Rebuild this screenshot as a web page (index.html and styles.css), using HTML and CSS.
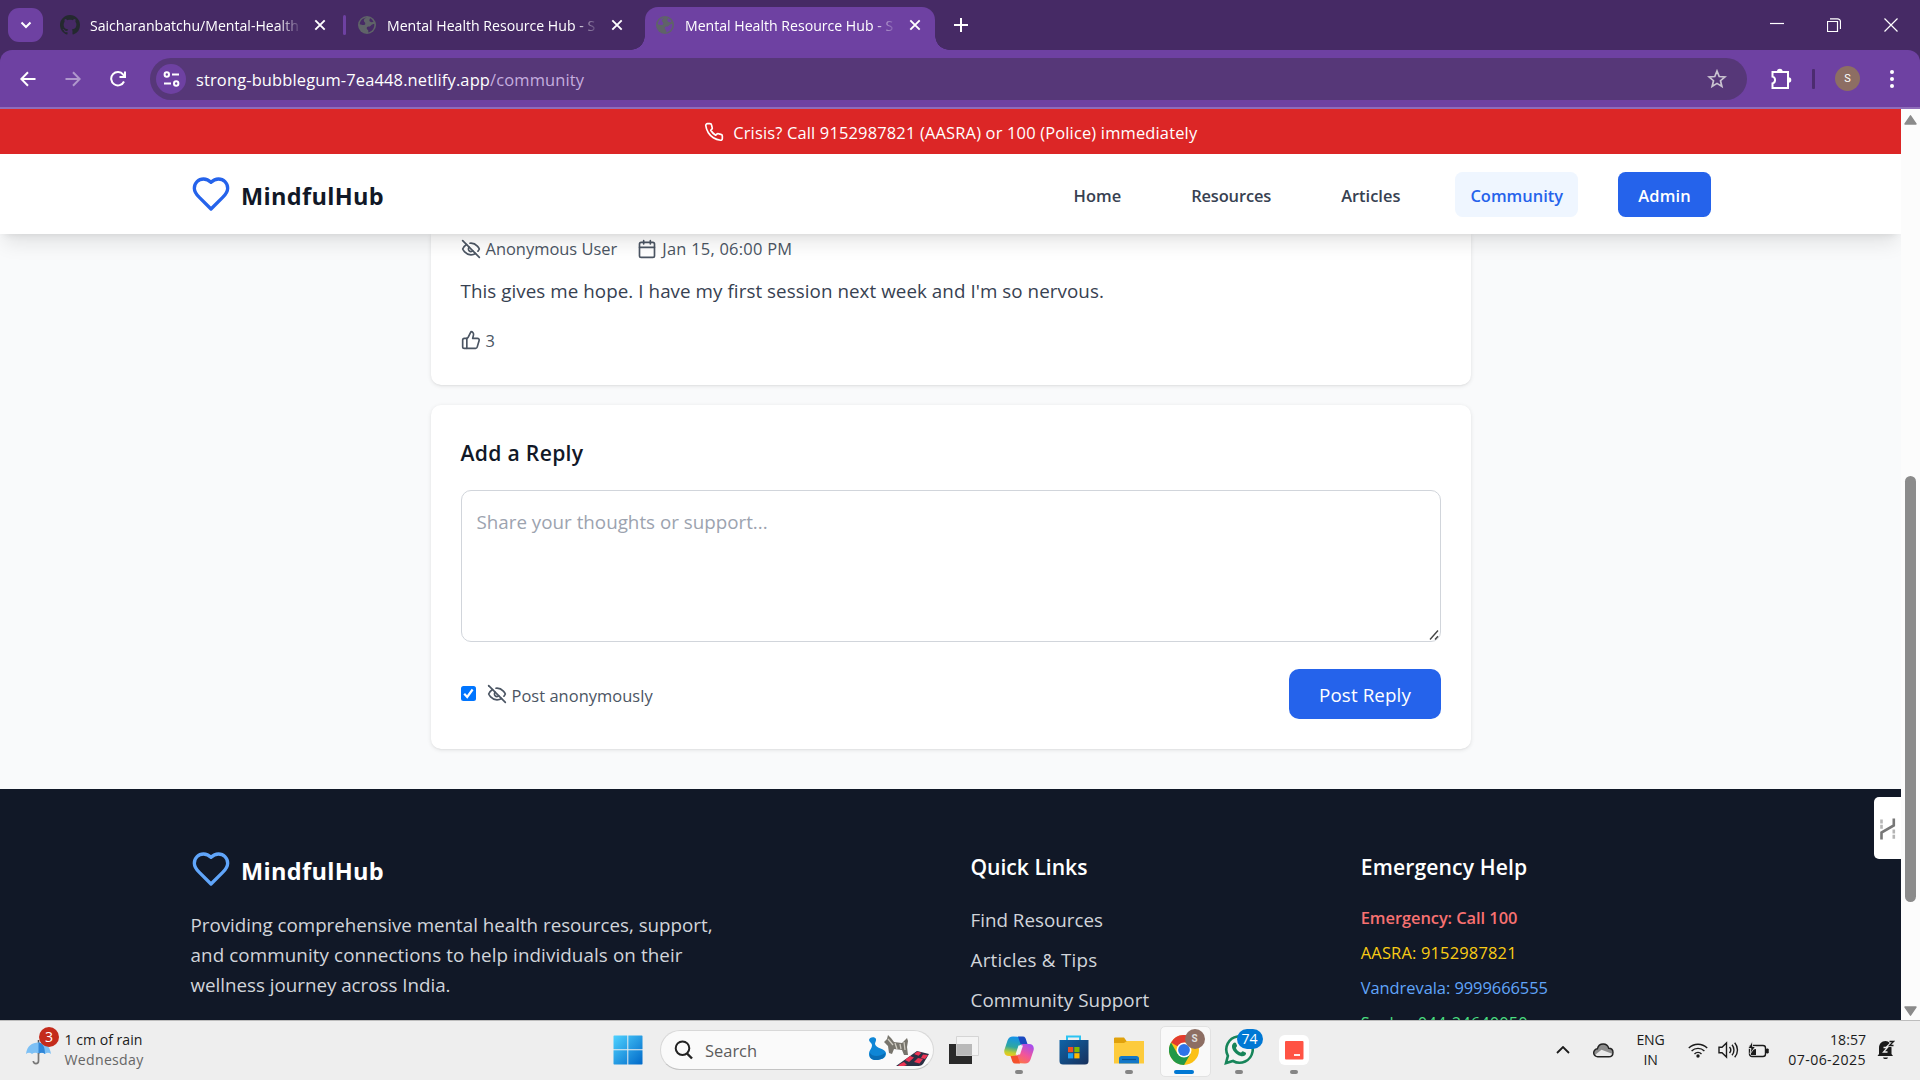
FILE: index.html
```html
<!DOCTYPE html>
<html lang="en">
<head>
<meta charset="utf-8">
<title>Mental Health Resource Hub</title>
<link rel="stylesheet" href="styles.css">
</head>
<body>
<svg class="sprite" aria-hidden="true">
  <symbol id="x" viewBox="0 0 12 12"><path d="M1.3 1.3l9.4 9.4M10.7 1.3l-9.4 9.4" fill="none" stroke="currentColor" stroke-width="1.9"/></symbol>
  <symbol id="globe" viewBox="0 0 20 20"><circle cx="10" cy="10" r="9" fill="#5f6368"/><path d="M10 2.6c-2 .4-3 1.400-3.200 3 0 1.500 1.500 1.700 1.500 3.200 0 1.200-1.400 1.400-2.700 1.200L2.700 9.300C3 5.800 6 2.800 10 2.600zM17.300 9c.3 4-2 7.600-6 8.400v-1.600c0-1.100-1.600-1-1.600-2.500 0-1.600 1.400-1.800 2.800-1.800 1.300 0 1.500-2.500 4.800-2.500zM13 3.300c1.500.7 2.800 1.900 3.500 3.500-1.500.8-3.500.4-4-.7-.3-.9.200-1.800.5-2.800z" fill="var(--tab)"/></symbol>
  <symbol id="heart" viewBox="0 0 24 24"><path d="M19 14c1.490-1.460 3-3.210 3-5.500A5.500 5.500 0 0 0 16.500 3c-1.760 0-3 .5-4.500 2-1.500-1.500-2.740-2-4.500-2A5.500 5.500 0 0 0 2 8.500c0 2.300 1.500 4.050 3 5.500l7 7Z"/></symbol>
  <symbol id="eye-off" viewBox="0 0 24 24"><path d="M9.880 9.880a3 3 0 1 0 4.240 4.240"/><path d="M10.730 5.080A10.430 10.430 0 0 1 12 5c7 0 10 7 10 7a13.160 13.160 0 0 1-1.670 2.680"/><path d="M6.610 6.610A13.526 13.526 0 0 0 2 12s3 7 10 7a9.740 9.740 0 0 0 5.390-1.610"/><path d="M2 2l20 20"/></symbol>
</svg>

<header class="browser">
  <div class="tabstrip">
    <button class="tab-search"><svg width="12" height="8" viewBox="0 0 12 8"><path d="M1.500 1.500L6 6l4.500-4.500" class="ln w2"/></svg></button>
    <div class="tab tab-a">
      <svg class="fav" viewBox="0 0 16 16"><path fill="#24292f" d="M8 0C3.580 0 0 3.580 0 8c0 3.540 2.290 6.530 5.470 7.590.4.070.55-.17.55-.38 0-.19-.01-.82-.01-1.490-2.010.37-2.530-.49-2.690-.94-.09-.23-.48-.94-.82-1.130-.28-.15-.68-.52-.01-.53.63-.01 1.080.58 1.230.82.72 1.210 1.870.87 2.330.66.070-.52.28-.87.51-1.070-1.780-.2-3.640-.89-3.640-3.950 0-.87.31-1.590.82-2.150-.08-.2-.36-1.020.08-2.120 0 0 .67-.21 2.200.82.64-.18 1.320-.27 2-.27s1.360.09 2 .27c1.530-1.040 2.200-.82 2.200-.82.44 1.100.16 1.920.08 2.120.51.56.82 1.270.82 2.150 0 3.070-1.870 3.750-3.650 3.950.29.25.54.73.54 1.480 0 1.070-.01 1.930-.01 2.200 0 .21.15.46.55.38A8.010 8.010 0 0 0 16 8c0-4.420-3.580-8-8-8z"/></svg>
      <span class="tab-title">Saicharanbatchu/Mental-Health</span>
      <svg class="tab-x"><use href="#x"/></svg>
    </div>
    <div class="tab-sep"></div>
    <div class="tab tab-b">
      <svg class="fav"><use href="#globe"/></svg>
      <span class="tab-title">Mental Health Resource Hub - S</span>
      <svg class="tab-x"><use href="#x"/></svg>
    </div>
    <div class="tab tab-active">
      <svg class="fav"><use href="#globe"/></svg>
      <span class="tab-title">Mental Health Resource Hub - S</span>
      <svg class="tab-x"><use href="#x"/></svg>
    </div>
    <svg class="tab-new" width="14" height="14" viewBox="0 0 14 14"><path d="M7 0v14M0 7h14" class="ln w2"/></svg>
    <div class="win">
      <svg width="14" height="14" viewBox="0 0 14 14"><path d="M0 5.500h14" class="ln"/></svg>
      <svg width="14" height="14" viewBox="0 0 14 14"><path d="M.5 3.500h10v10H.5z" class="ln"/><path d="M3 .8h7.500a3 3 0 0 1 3 3V11" class="ln"/></svg>
      <svg width="14" height="14" viewBox="0 0 14 14"><path d="M.5.5l13 13M13.500.5l-13 13" class="ln"/></svg>
    </div>
  </div>
  <div class="toolbar">
    <svg class="back" width="16" height="16" viewBox="0 0 16 16"><path d="M15.500 8H1.500M8 1.200L1.300 8 8 14.800" class="ln w2"/></svg>
    <svg class="fwd" width="16" height="16" viewBox="0 0 16 16"><path d="M.5 8h14M8 1.200L14.700 8 8 14.800" class="ln w2"/></svg>
    <svg class="reload" width="16" height="16" viewBox="0 0 16 16"><path d="M14 10.500A6.700 6.700 0 1 1 13.200 3.600L14.800 5.500" class="ln w2"/><path d="M15 .5v5.600H9.500" class="ln w2"/></svg>
    <div class="omnibox">
      <div class="site-chip"><svg width="17" height="16" viewBox="0 0 17 16"><circle cx="3.800" cy="3.500" r="2.200" class="ln w2"/><path d="M9 3.500h7M1 12.500h7" class="ln w2"/><circle cx="13.200" cy="12.500" r="2.200" class="ln w2"/></svg></div>
      <span class="url">strong-bubblegum-7ea448.netlify.app<span class="path">/community</span></span>
      <svg class="star" width="20" height="20" viewBox="0 0 20 20"><path d="M10 2l2.200 5.500 5.800.4-4.500 3.800 1.400 5.800L10 14.400l-4.900 3.100 1.400-5.800L2 7.900l5.800-.4z"/></svg>
    </div>
    <svg class="puzzle" width="22" height="22" viewBox="0 0 22 22"><path d="M2.500 4h15.500v16H2.500v-4.600c3.400-.8 3.400-6 0-6.800z" class="ln w2"/><path d="M7 3.500a2.800 2.800 0 0 1 5.600 0zM18.500 9.200a2.800 2.800 0 0 1 0 5.600z" fill="currentColor"/></svg>
    <div class="bar-sep"></div>
    <div class="avatar">S</div>
    <div class="kebab"><i></i><i></i><i></i></div>
  </div>
</header>

<div class="viewport">
  <div class="page">
    <div class="crisis">
      <svg class="ic ic20" viewBox="0 0 24 24"><path d="M22 16.920v3a2 2 0 0 1-2.180 2 19.790 19.790 0 0 1-8.630-3.070 19.500 19.500 0 0 1-6-6 19.790 19.790 0 0 1-3.070-8.670A2 2 0 0 1 4.110 2h3a2 2 0 0 1 2 1.720 12.840 12.840 0 0 0 .7 2.810 2 2 0 0 1-.45 2.110L8.090 9.910a16 16 0 0 0 6 6l1.270-1.270a2 2 0 0 1 2.110-.45 12.840 12.840 0 0 0 2.810.7A2 2 0 0 1 22 16.920z"/></svg>
      <span>Crisis? Call 9152987821 (AASRA) or 100 (Police) immediately</span>
    </div>
    <nav class="nav">
      <div class="wrap nav-row">
        <div class="brand"><svg class="ic ic40"><use href="#heart"/></svg><span>MindfulHub</span></div>
        <div class="links">
          <a>Home</a><a class="res">Resources</a><a>Articles</a><a class="on">Community</a><a class="admin">Admin</a>
        </div>
      </div>
    </nav>

    <main class="thread">
      <section class="card reply">
        <div class="meta">
          <span class="m"><svg class="ic ic20"><use href="#eye-off"/></svg>Anonymous User</span>
          <span class="m date"><svg class="ic ic20" viewBox="0 0 24 24"><rect x="3" y="4" width="18" height="18" rx="2"/><path d="M16 2v4M8 2v4M3 10h18"/></svg><span>Jan 15, 06:00 PM</span></span>
        </div>
        <p class="body">This gives me hope. I have my first session next week and I'm so nervous.</p>
        <div class="m likes"><svg class="ic ic20" viewBox="0 0 24 24"><path d="M7 10v12"/><path d="M15 5.880 14 10h5.830a2 2 0 0 1 1.920 2.560l-2.330 8A2 2 0 0 1 17.500 22H4a2 2 0 0 1-2-2v-8a2 2 0 0 1 2-2h2.760a2 2 0 0 0 1.790-1.110L12 2a3.130 3.130 0 0 1 3 3.880Z"/></svg>3</div>
      </section>
      <section class="card form">
        <h3>Add a Reply</h3>
        <div class="field">
          <textarea placeholder="Share your thoughts or support..."></textarea>
          <svg class="grip" width="10" height="11" viewBox="0 0 10 11"><path d="M1 10.500L9 1.500M6 10.500L9 7.200"/></svg>
        </div>
        <div class="form-row">
          <label class="anon"><span class="check"><svg width="15" height="15" viewBox="0 0 15 15"><path d="M3.200 7.800l3 3.200 5.400-7.500"/></svg></span><svg class="ic ic20"><use href="#eye-off"/></svg><span>Post anonymously</span></label>
          <button class="post">Post Reply</button>
        </div>
      </section>
    </main>

    <footer class="footer">
      <div class="wrap cols">
        <div class="about">
          <div class="brand"><svg class="ic ic40"><use href="#heart"/></svg><span>MindfulHub</span></div>
          <p>Providing comprehensive mental health resources, support,<br><span class="l2">and community connections to help individuals on their</span><br>wellness journey across India.</p>
        </div>
        <div>
          <h4 class="ql">Quick Links</h4>
          <ul class="quick"><li>Find Resources</li><li class="at">Articles &amp; Tips</li><li class="l2">Community Support</li></ul>
        </div>
        <div>
          <h4>Emergency Help</h4>
          <ul class="help"><li class="red">Emergency: Call 100</li><li class="yellow">AASRA: 9152987821</li><li class="blue">Vandrevala: 9999666555</li><li class="green">Sneha: 044-24640050</li></ul>
        </div>
      </div>
      <div class="widget"><svg width="17" height="22" viewBox="0 0 17 22"><path d="M2.500 1.500v9.500M14.800 11.500v10" stroke="#b5b5b5" stroke-width="2.600" stroke-dasharray="4 1.200" fill="none"/><path d="M2.500 21.500v-7L14.800 7.500V.5" stroke="#777" stroke-width="2.600" fill="none"/></svg></div>
    </footer>
  </div>
  <div class="scrollbar">
    <svg width="13" height="10" viewBox="0 0 13 10"><path d="M6.500.8L12 9H1z"/></svg>
    <div class="thumb"></div>
    <svg width="13" height="10" viewBox="0 0 13 10"><path d="M6.500 9.200L12 1H1z"/></svg>
  </div>
</div>

<div class="taskbar">
  <div class="weather">
    <div class="umb">
      <svg width="26" height="26" viewBox="0 0 26 26"><path d="M12.500 1v4" stroke="#555" stroke-width="1.500"/><path d="M0 15C1 7 6 3.500 12.500 3.500S24 7 25 15c-2-1.600-4-1.600-6 0-2-1.600-4-1.600-6.500 0-2-1.600-4.500-1.600-6.500 0-2-1.600-4-1.600-6 0z" fill="#7cc0f5"/><path d="M12.500 3.500C17 4 19 8 19 15c-2-1.600-4.500-1.600-6.500 0z" fill="#2f86d8"/><path d="M12.500 14v8a2.600 2.600 0 0 1-5.200 0" fill="none" stroke="#777" stroke-width="1.700"/></svg>
      <b class="badge">3</b>
    </div>
    <div class="wtext"><span>1 cm of rain</span><span class="dim">Wednesday</span></div>
  </div>
  <div class="apps">
    <div class="cell"><svg width="30" height="30" viewBox="0 0 30 30"><defs><linearGradient id="w" x2="1" y2="1"><stop stop-color="#4fd2ff"/><stop offset="1" stop-color="#0068c8"/></linearGradient></defs><path fill="url(#w)" d="M1 .5h13.300v13.800H.5V1zM15.300.5H29l.5.5v13.300H15.300zM.5 15.300h13.800v14.200H1l-.5-.5zM15.300 15.300h14.200V29l-.5.5H15.300z"/></svg></div>
    <div class="search">
      <svg width="20" height="20" viewBox="0 0 20 20"><circle cx="8.500" cy="8.200" r="6.800" fill="none" stroke="#222" stroke-width="2"/><path d="M13 13.500l5 5" stroke="#222" stroke-width="2.400"/></svg>
      <span>Search</span>
      <svg class="art" width="62" height="34" viewBox="0 0 62 34">
        <path d="M1 7c0-3 6-4 7-1 .5 2-1 3-1 5 1 5 10 4 11 9 .5 5-5 7-10 7-4 0-7-2-7-6 0-4 3-5 3-9 0-2-3-3-3-5z" fill="#0f86d6"/><path d="M2 20c2 4 10 4 15 0 .6 5-4 7-9 7-4 0-7-2-6-7z" fill="#0a6db5"/>
        <path d="M16 9l3-3 1-4 3 3 3 4 8 1 5-5 1 3-1 6 1 8h-4l-2-5-8-1-2 5-3-1-1-7-3-3z" fill="#77746c"/><path d="M20 6l5 6M27 10l2 6M32 11l1 5M36 9l1 8" stroke="#cfccc2" stroke-width="1.300"/>
        <path d="M28 33L49 18l12 3-6 10c-2 2-4 2-6 2z" fill="#2b3044"/><path d="M37 27l5-4 4 1.500-5 4.500zM46 21l3.500-2.500 4 1.200-3 3zM46 29l4-4 5 1-3.500 4.500zM55 21.500l5 .5-3 4-4-1zM32 31l4-2 3 3-3 1h-6z" fill="#ee3554"/>
      </svg>
    </div>
    <div class="cell"><svg width="30" height="28" viewBox="0 0 30 28"><path d="M0 8h23v20H0z" fill="#2a2a2a"/><path d="M7.500.5h22v19h-22z" fill="#f4f4f4" stroke="#d5d5d5"/><path d="M7.500 8H23v11.500H7.500z" fill="#b9b9b9"/></svg></div>
    <div class="cell run"><svg width="30" height="28" viewBox="0 0 30 28"><defs><linearGradient id="c1" x1=".3" x2=".1" y2="1"><stop stop-color="#1593e8"/><stop offset=".5" stop-color="#2fa7a0"/><stop offset=".8" stop-color="#c3cf2e"/><stop offset="1" stop-color="#fbc318"/></linearGradient><linearGradient id="c2" x1=".8" x2=".2" y2="1"><stop stop-color="#a44df0"/><stop offset=".5" stop-color="#f2559a"/><stop offset="1" stop-color="#ff7b35"/></linearGradient></defs><path d="M19 1l3 7-6 1-4 11H5c-4 0-5.500-3-4.500-6.500L3.500 4.500C4.500 2 6 .5 9 .5z" fill="url(#c1)"/><path d="M14 .5h5c2 0 2.800 2 3.300 4l1.200 3.500h-7z" fill="#1a49c0"/><path d="M11 27l-3-7 6-1 4-11h7c4 0 5.500 3 4.500 6.500l-3 9C25.500 26 24 27.500 21 27.500z" fill="url(#c2)"/><path d="M16 27.500h-5c-2 0-2.800-2-3.300-4L6.500 20h7z" fill="#f4512c"/><path d="M14.500 9.500h4.500l-3 9h-4.500z" fill="#f3f3f3"/></svg></div>
    <div class="cell"><svg width="30" height="30" viewBox="0 0 30 30"><path d="M8 6V1.500h13V6" fill="none" stroke="#2cc3f2" stroke-width="2"/><defs><linearGradient id="st" x2="1" y2="1"><stop stop-color="#0f64a8"/><stop offset="1" stop-color="#17305c"/></linearGradient></defs><path d="M.5 5h29v21a3.500 3.500 0 0 1-3.500 3.500H4A3.500 3.500 0 0 1 .5 26z" fill="url(#st)"/><path d="M9 12h5.200v5.200H9z" fill="#f25022"/><path d="M15.300 12h5.200v5.200h-5.200z" fill="#7fba00"/><path d="M9 18.200h5.200v5.200H9z" fill="#1ba1f2"/><path d="M15.300 18.200h5.200v5.200h-5.200z" fill="#ffb900"/></svg></div>
    <div class="cell run"><svg width="30" height="27" viewBox="0 0 30 27"><path d="M0 1.500C0 .8.700.5 1.500.5H10l2.500 3.500H30v6H0z" fill="#e0a10c"/><path d="M0 6h10l3-2h17v22.500H0z" fill="#fdcb3c"/><path d="M5 26.500v-5c0-1.500 1-2.500 2.500-2.500h15c1.500 0 2.500 1 2.500 2.500v5z" fill="#1378c8"/><path d="M8 22.500h14" stroke="#0b518d" stroke-width="1.200"/></svg></div>
    <div class="cell active"><svg width="30" height="30" viewBox="0 0 30 30"><circle cx="15" cy="15" r="15" fill="#fbc116"/><path d="M15 15L2 7.500A15 15 0 0 1 28 7.500H15z" fill="#e33b2e"/><path d="M2 7.500A15 15 0 0 0 15 30l6.500-11.300L15 15 8.500 18.700z" fill="#229848"/><circle cx="15" cy="15" r="7.500" fill="#fff"/><circle cx="15" cy="15" r="5.900" fill="#2f74e8"/></svg><b class="badge ava">S</b></div>
    <div class="cell run"><svg width="30" height="30" viewBox="0 0 30 30"><path d="M2 28l1.900-7.200A13.200 13.200 0 1 1 9 26z" fill="#f4f4f4" stroke="#17855a" stroke-width="2.600"/><path d="M9.500 8c1-.9 2.200-.7 2.700.5l.8 2c.3.900-1.200 2-1.100 2.400.9 2 2.500 3.600 4.700 4.600.6.200 1.500-1.600 2.300-1.300l2.600 1.300c1 .6.500 2-.3 2.800-1.900 1.700-4.700 1.100-7.500-.5-2.500-1.500-4.400-3.600-5.300-6C7.600 11.500 7.900 9.300 9.500 8z" fill="#17855a"/></svg><b class="badge wa">74</b></div>
    <div class="cell run"><svg width="30" height="30" viewBox="0 0 30 30"><rect width="30" height="30" rx="6" fill="#fff"/><rect x="6" y="6" width="18.500" height="18.500" rx="1" fill="#ff5344"/><path d="M15 20h6" stroke="#fff" stroke-width="1.800"/></svg></div>
  </div>
  <div class="tray">
    <svg class="t1" width="14" height="8" viewBox="0 0 14 8"><path d="M1 7l6-6 6 6" class="dk"/></svg>
    <svg class="t2" width="21" height="15" viewBox="0 0 21 15"><path d="M5 13.800a4 4 0 0 1-.6-8C5 3.200 7.200 1 10.200 1c2.700 0 4.800 1.600 5.500 4.200 2.600 0 4.300 1.900 4.300 4.300s-1.700 4.300-4.200 4.300z" fill="#8d8d8d" stroke="#222" stroke-width="1.400"/><path d="M2.500 11.500L8.500 6.800l10.500 4c-.6 1.500-1.800 2.300-3 2.300H5c-1.200 0-2-.6-2.500-1.600z" fill="#e9e9e9"/></svg>
    <div class="lang"><span>ENG</span><span>IN</span></div>
    <svg class="t3" width="20" height="16" viewBox="0 0 20 16"><path d="M.8 6a13 13 0 0 1 18.400 0M3.600 9a9 9 0 0 1 12.800 0M6.500 12a5 5 0 0 1 7 0" class="dk t"/><circle cx="10" cy="14" r="1.700" fill="#1b1b1b"/></svg>
    <svg class="t4" width="21" height="18" viewBox="0 0 21 18"><path d="M1 6.300h3L8.500 2v14L4 11.700H1z" class="dk t"/><path d="M11.500 6c1.500 1.700 1.500 4.300 0 6M14 3.800c2.600 3 2.600 7.400 0 10.400M16.700 1.700c3.700 4.300 3.700 10.300 0 14.600" class="dk t"/></svg>
    <svg class="t5" width="21" height="18" viewBox="0 0 21 18"><rect x="1.500" y="4.500" width="16" height="11" rx="2.500" class="dk t"/><path d="M18.500 8h1.700v4h-1.700z" fill="#1b1b1b" stroke="#1b1b1b"/><path d="M3 14V9l5-1v6z" fill="#1b1b1b"/><path d="M4.500 0L0 7.500h3L2 13l5.500-7.500h-3z" fill="#1b1b1b" stroke="#eee" stroke-width=".8"/></svg>
    <div class="clock"><span>18:57</span><span class="d">07-06-2025</span></div>
    <svg class="t6" width="18" height="20" viewBox="0 0 18 20"><path d="M2 14V8c0-4 2.500-7 6.500-7 3.500 0 6 3 6 7v6l1.500 2H.5z" fill="#1b1b1b"/><path d="M6 17.500h5c-.5 2-4.500 2-5 0z" fill="#1b1b1b"/><path d="M6.500 7.500h4l-4 4.500h4" fill="none" stroke="#eee" stroke-width="1.300"/><path d="M12.500 1.500h4l-4 4h4" fill="none" stroke="#eee" stroke-width="3.200"/><path d="M12.500 1.500h4l-4 4h4" fill="none" stroke="#1b1b1b" stroke-width="1.300"/></svg>
  </div>
</div>
</body>
</html>
```
FILE: styles.css
```css
* { box-sizing: border-box; }
body {
  margin: 0; width: 1920px; height: 1080px; overflow: hidden;
  display: flex; flex-direction: column;
  font-family: "Open Sans", "Noto Sans", sans-serif; font-size: 18.8px; line-height: 30px;
}
h3, h4, p, ul { margin: 0; padding: 0; }
ul { list-style: none; }
svg { display: block; flex: none; }
button { border: 0; padding: 0; font: inherit; color: inherit; }
.sprite { position: absolute; width: 0; height: 0; }
.ln { fill: none; stroke: currentColor; stroke-width: 1.2; }
.ln.w2 { stroke-width: 2; }
.ic { fill: none; stroke: currentColor; stroke-width: 2; stroke-linecap: round; stroke-linejoin: round; }
.ic20 { width: 20px; height: 20px; }
.ic40 { width: 40px; height: 40px; }

/* Browser chrome */
.browser { flex: none; height: 109px; background: #462a65; color: #fff; border-bottom: 2px solid #8f6cb9; }
.tabstrip { height: 50px; display: flex; align-items: center; }
.tab-search { width: 35px; height: 34px; margin: 0 0 0 8px; border-radius: 11px; background: #6e41a2; display: flex; align-items: center; justify-content: center; }
.tab { --tab: #462a65; display: flex; align-items: center; font-size: 14.1px; line-height: 20px; }
.tab-a { margin-left: 17px; width: 283px; }
.tab-b { margin-left: 11px; width: 288px; }
.tab-active {
  --tab: #6e41a2; position: relative; align-self: flex-end; width: 290px; height: 43px; padding: 0 0 7px 10px;
  border-radius: 13px 13px 0 0; background: #6e41a2;
}
.tab-active::before, .tab-active::after { content: ""; position: absolute; bottom: 0; width: 14px; height: 14px; }
.tab-active::before { left: -14px; background: radial-gradient(circle at 0 0, transparent 13.5px, #6e41a2 14px); }
.tab-active::after { right: -14px; background: radial-gradient(circle at 100% 0, transparent 13.5px, #6e41a2 14px); }
.fav { width: 20px; height: 20px; }
.tab-title { width: 211px; margin-left: 10px; padding-top: 2px; white-space: nowrap; -webkit-mask: linear-gradient(90deg, #000 188px, transparent 212px); mask: linear-gradient(90deg, #000 188px, transparent 212px); }
.tab-x { width: 12px; height: 12px; margin-left: 13px; }
.tab-sep { width: 3px; height: 20px; border-radius: 2px; background: #6e41a2; }
.tab-new { margin-left: 19px; }
.win { margin-left: auto; display: flex; gap: 43px; padding-right: 22px; }
.toolbar { height: 57px; display: flex; align-items: center; background: #6e41a2; border-radius: 12px 12px 0 0; }
.back { margin-left: 20px; }
.fwd { margin-left: 29px; opacity: .45; }
.reload { margin-left: 29px; }
.omnibox { width: 1597px; height: 42px; margin-left: 24px; border-radius: 21px; background: #563778; display: flex; align-items: center; padding: 0 20px 0 6px; }
.site-chip { width: 30px; height: 30px; border-radius: 50%; background: #6e41a2; display: flex; align-items: center; justify-content: center; }
.url { margin-left: 10px; padding-top: 2px; font-size: 16.45px; letter-spacing: .15px; }
.path { color: #c5aedf; }
.star { margin-left: auto; fill: none; stroke: #c9c3d0; stroke-width: 1.7; }
.puzzle { margin-left: 23px; }
.bar-sep { width: 3px; height: 20px; margin-left: 20px; background: #4c2c70; border-radius: 1px; }
.avatar { width: 25px; height: 25px; margin-left: 20px; border-radius: 50%; background: #8d6e63; font: 11px/25px Roboto, sans-serif; text-align: center; }
.kebab { margin-left: 30px; display: grid; gap: 3px; }
.kebab i { width: 4px; height: 4px; border-radius: 50%; background: #fff; }

/* Page */
.viewport { flex: none; height: 911px; display: flex; overflow: hidden; background: #f9fafb; }
.page { width: 1901px; height: 911px; overflow: hidden; }
.wrap { width: 1521px; margin: 0 auto; }
.crisis { height: 45px; display: flex; align-items: center; justify-content: center; gap: 9.5px; background: #dc2626; color: #fff; font-size: 16.45px; letter-spacing: .17px; }
.crisis span { padding-top: 2px; }
.nav { position: relative; height: 80px; background: #fff; box-shadow: 0 12.5px 19px -4px rgba(0,0,0,.1), 0 5px 7.5px -5px rgba(0,0,0,.1); }
.nav-row { height: 80px; display: flex; align-items: center; justify-content: space-between; }
.brand { display: flex; align-items: center; height: 40px; gap: 10px; padding-left: 1px; font-size: 23.5px; font-weight: 700; letter-spacing: .33px; color: #111827; }
.brand span { padding-top: 3px; }
.nav .brand svg { color: #2563eb; }
.links { display: flex; gap: 40px; padding-top: 1px; font-size: 16.45px; font-weight: 600; color: #374151; }
.links a { height: 45px; line-height: 47px; padding: 0 15px; border-radius: 7.5px; }
.links .res { letter-spacing: -.13px; }
.links .on { background: #eff6ff; color: #2563eb; letter-spacing: .02px; }
.links .admin { padding: 0 20px; background: #2563eb; color: #fff; letter-spacing: .2px; }

.thread { width: 1040px; margin: 0 auto; height: 555px; }
.card { background: #fff; border-radius: 10px; padding: 0 30px; box-shadow: 0 1px 4px rgba(0,0,0,.1), 0 1px 2px -1px rgba(0,0,0,.1); }
.reply { height: 151px; padding-top: 2px; border-radius: 0 0 10px 10px; }
.meta { display: flex; gap: 20px; }
.m { display: flex; align-items: center; gap: 5px; height: 25px; font-size: 16.45px; line-height: 25px; color: #4b5563; }
.date span { letter-spacing: .25px; }
.body { margin-top: 15px; letter-spacing: .06px; color: #374151; }
.likes { margin-top: 21.5px; }
.form { margin-top: 20px; height: 344px; padding-top: 30px; }
.form h3 { font-size: 21.15px; line-height: 35px; font-weight: 600; letter-spacing: .3px; color: #111827; }
.field { position: relative; margin-top: 20px; }
.form textarea { display: block; width: 980px; height: 152px; padding: 16px 15px; border: 1px solid #d1d5db; border-radius: 10px; font: inherit; resize: none; background: #fff; }
.form textarea::placeholder { color: #9ca3af; opacity: 1; }
.grip { position: absolute; right: 2px; bottom: 2px; fill: none; stroke: #444; stroke-width: 1.4; }
.form-row { margin-top: 27px; display: flex; justify-content: space-between; align-items: center; }
.anon { display: flex; align-items: center; font-size: 16.45px; line-height: 25px; color: #4b5563; }
.anon .check { width: 15px; height: 15px; margin: 0 11px 2px 0; border-radius: 2.5px; background: #0075ff; }
.check path { fill: none; stroke: #fff; stroke-width: 2.2; }
.anon > span:last-child { margin-left: 5px; padding-top: 3px; letter-spacing: .04px; }
.post { width: 152px; height: 50px; padding: 1px 0 0 1px; border-radius: 10px; background: #2563eb; color: #fff; letter-spacing: .1px; }

.footer { position: relative; height: 300px; padding-top: 60px; background: #111827; color: #d1d5db; }
.footer .brand { color: #fff; }
.footer .brand svg { color: #60a5fa; }
.cols { display: grid; grid-template-columns: 740.5px 350.25px 350.25px; gap: 40px; }
.about p { margin-top: 21px; white-space: nowrap; padding-left: .5px; letter-spacing: -.02px; }
.l2 { letter-spacing: .1px; }
.cols h4 { font-size: 21.15px; line-height: 35px; font-weight: 600; letter-spacing: .1px; color: #fff; }
.cols h4.ql { letter-spacing: -.03px; }
.quick { margin-top: 20.7px; display: grid; gap: 10px; }
.quick .at { letter-spacing: .25px; }
.help { margin-top: 21px; display: grid; gap: 10px; font-size: 16.45px; line-height: 25px; }
.red { color: #f87171; font-weight: 600; letter-spacing: -.06px; }
.yellow { color: #facc15; letter-spacing: .18px; }
.blue { color: #60a5fa; letter-spacing: -.05px; }
.green { color: #4ade80; letter-spacing: .12px; }
.widget { position: absolute; right: 0; top: 8px; width: 27px; height: 62px; background: #fff; border-radius: 5px 0 0 5px; display: flex; align-items: center; padding: 1px 0 0 5px; }

.scrollbar { width: 19px; background: #fcfcfc; display: flex; flex-direction: column; align-items: center; padding: 6px 0 4px; fill: #8b8b8b; }
.scrollbar path { stroke: #8b8b8b; stroke-width: 1.4; stroke-linejoin: round; }
.thumb { width: 11px; height: 426px; margin: 351px 0 auto; border-radius: 6px; background: #8b8b8b; }

/* Taskbar */
.taskbar { flex: none; height: 60px; display: grid; grid-template-columns: 600px 722px 1fr; background: #eee; border-top: 1px solid #bdbdbd; color: #1b1b1b; font-size: 14.1px; line-height: 20px; }
.weather { display: flex; padding: 0 0 0 26px; align-items: center; }
.umb { position: relative; padding-top: 3px; }
.badge { position: absolute; width: 20px; height: 20px; border-radius: 10px; color: #fff; font-weight: 400; text-align: center; line-height: 20px; }
.umb .badge { left: 13px; top: -9px; background: #c42b1c; }
.wtext { display: grid; margin: 0 0 2px 12.5px; }
.dim { color: #666; letter-spacing: .3px; }
.apps { display: flex; align-items: center; }
.cell { position: relative; width: 55px; height: 59px; display: flex; align-items: center; justify-content: center; padding-bottom: 1px; }
.run::after, .active::after { content: ""; position: absolute; left: 23.5px; bottom: 6px; width: 8px; height: 4px; border-radius: 2px; background: #858585; }
.active::before { content: ""; position: absolute; left: 3px; top: 5px; width: 49px; height: 49px; border-radius: 5px; background: #f9f9f9; border: 1px solid #e2e2e2; }
.active svg { position: relative; }
.active::after { left: 17.5px; width: 20px; background: #0078d4; }
.ava { left: 28px; top: 8px; background: #8d6e63; font: 700 10px/20px Roboto, sans-serif; color: #ddd; }
.wa { left: 25px; top: 8px; width: 26px; background: #0078d4; }
.search { width: 274px; height: 40px; margin: 0 3px 1px 4.5px; border-radius: 20px; background: #fafafa; border: 1px solid #d8d8d8; border-bottom-color: #c4c4c4; display: flex; align-items: center; padding: 0 3px 0 13px; font-size: 16.45px; color: #5c5c5c; }
.search span { margin-left: 11.5px; padding-top: 1px; }
.art { margin-left: auto; }
.tray { display: flex; align-items: center; padding-bottom: 1px; }
.dk { fill: none; stroke: #1b1b1b; stroke-width: 1.8; }
.dk.t { stroke-width: 1.4; }
.t1 { margin-left: 233.5px; }
.t2 { margin-left: 23px; }
.lang { width: 30px; margin-left: 22px; display: grid; text-align: center; letter-spacing: -.2px; }
.t3 { margin-left: 22.5px; }
.t4, .t5 { margin-left: 9.5px; }
.clock { width: 97px; display: grid; text-align: right; }
.clock .d { letter-spacing: .42px; }
.t6 { margin-left: 10.5px; }
```
